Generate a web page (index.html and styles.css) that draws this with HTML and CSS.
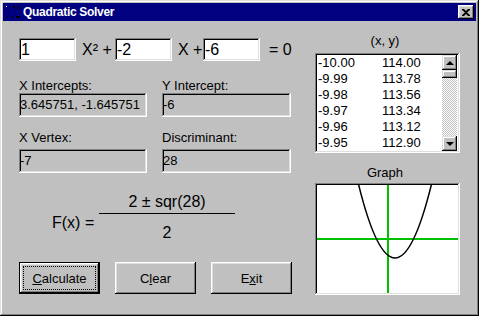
FILE: index.html
```html
<!DOCTYPE html>
<html>
<head>
<meta charset="utf-8">
<link rel="stylesheet" href="styles.css">
</head>
<body>
<div class="window">
  <div class="titlebar">
    <svg class="app-icon" width="16" height="16" viewBox="0 0 16 16">
      <rect x="2" y="3" width="1" height="1" fill="#000"/>
      <rect x="1" y="2" width="1" height="1" fill="#fff"/>
      <rect x="8" y="2" width="2" height="2" fill="#000"/>
      <rect x="12" y="2" width="1" height="1" fill="#000"/>
      <rect x="14" y="2" width="1" height="1" fill="#000"/>
      <rect x="13" y="3" width="1" height="1" fill="#000"/>
      <rect x="12" y="4" width="1" height="1" fill="#000"/>
      <rect x="14" y="4" width="1" height="1" fill="#000"/>
      <rect x="3" y="9" width="1" height="1" fill="#000"/>
      <rect x="2" y="12" width="1" height="2" fill="#000"/>
      <rect x="7" y="12" width="2" height="1" fill="#000"/>
      <rect x="11" y="12" width="4" height="2" fill="#000"/>
    </svg>
    <span class="title">Quadratic Solver</span>
    <div class="close">
      <svg width="8" height="7" viewBox="0 0 8 7">
        <path d="M0 0h2l2 2 2-2h2v1L5 3.5 8 6v1H6L4 5 2 7H0V6l3-2.5L0 1z" fill="#000"/>
      </svg>
    </div>
  </div>
  <div class="client">
    <div class="left">
      <div class="equation">
        <div class="field white eq-box">1</div>
        <span class="term term-a">X² +</span>
        <div class="field white eq-box">-2</div>
        <span class="term term-b">X +</span>
        <div class="field white eq-box">-6</div>
        <span class="term term-c">= 0</span>
      </div>
      <div class="results">
        <div class="group">
          <div class="label">X Intercepts:</div>
          <div class="field ro">3.645751, -1.645751</div>
        </div>
        <div class="group">
          <div class="label">Y Intercept:</div>
          <div class="field ro">-6</div>
        </div>
        <div class="group second">
          <div class="label">X Vertex:</div>
          <div class="field ro">-7</div>
        </div>
        <div class="group second">
          <div class="label">Discriminant:</div>
          <div class="field ro">28</div>
        </div>
      </div>
      <div class="formula">
        <div class="fx">F(x) =</div>
        <div class="fraction">
          <div class="num">2 ± sqr(28)</div>
          <div class="den">2</div>
        </div>
      </div>
      <div class="buttons">
        <div class="btn default"><span class="focus"><u>C</u>alculate</span></div>
        <div class="btn">C<u>l</u>ear</div>
        <div class="btn">E<u>x</u>it</div>
      </div>
    </div>
    <div class="right">
      <div class="caption">(x, y)</div>
      <div class="listbox">
        <div class="rows">
          <div class="row"><span class="cx">-10.00</span><span>114.00</span></div>
          <div class="row"><span class="cx">-9.99</span><span>113.78</span></div>
          <div class="row"><span class="cx">-9.98</span><span>113.56</span></div>
          <div class="row"><span class="cx">-9.97</span><span>113.34</span></div>
          <div class="row"><span class="cx">-9.96</span><span>113.12</span></div>
          <div class="row"><span class="cx">-9.95</span><span>112.90</span></div>
        </div>
        <div class="scrollbar">
          <div class="sb-btn"><span class="arrow up"></span></div>
          <div class="sb-thumb"></div>
          <div class="sb-track"></div>
          <div class="sb-btn"><span class="arrow down"></span></div>
        </div>
      </div>
      <div class="caption graph-caption">Graph</div>
      <div class="graph">
        <svg width="141" height="108" viewBox="0 0 141 108">
          <rect x="70" y="0" width="2" height="108" fill="#00c000"/>
          <rect x="0" y="53" width="141" height="2" fill="#00c000"/>
          <path d="M39.5 -9.1 Q78 155.1 116.5 -9.1" fill="none" stroke="#000" stroke-width="1.5"/>
        </svg>
      </div>
    </div>
  </div>
</div>
</body>
</html>
```
FILE: styles.css
```css
* { box-sizing: border-box; }

body {
  margin: 0;
  background: #c0c0c0;
  font-family: "Liberation Sans", Arial, sans-serif;
  font-size: 13px;
  color: #000;
}

.window {
  width: 479px;
  height: 316px;
  padding: 3px;
  background: #c0c0c0;
  box-shadow: inset -1px -1px #000, inset 1px 1px #dfdfdf,
              inset -2px -2px #808080, inset 2px 2px #fff;
  display: flex;
  flex-direction: column;
}

.titlebar {
  height: 18px;
  background: #000080;
  color: #fff;
  display: flex;
  align-items: center;
  padding: 0 2px 0 2px;
}

.app-icon { display: block; margin-right: 2px; }

.title {
  flex: 1;
  font-weight: bold;
  font-size: 12px;
  letter-spacing: -0.3px;
  line-height: 18px;
}

.close {
  width: 16px;
  height: 14px;
  background: #c0c0c0;
  box-shadow: inset -1px -1px #000, inset 1px 1px #fff,
              inset -2px -2px #808080, inset 2px 2px #dfdfdf;
  display: flex;
  align-items: center;
  justify-content: center;
  padding-right: 1px;
}
.close svg { display: block; }

.client {
  flex: 1;
  display: flex;
  padding-left: 16px;
}

.left {
  width: 273px;
  padding-top: 17px;
}

.field {
  box-shadow: inset -1px -1px #fff, inset 1px 1px #808080,
              inset -2px -2px #dfdfdf, inset 2px 2px #000;
  padding: 0 1px;
  white-space: nowrap;
  overflow: hidden;
}
.field.white { background: #fff; }
.field.ro { background: #c0c0c0; height: 24px; line-height: 24px; }

.equation {
  display: flex;
  align-items: center;
  height: 23px;
}
.eq-box {
  width: 57px;
  height: 23px;
  line-height: 23px;
  font-size: 16px;
  padding-left: 2px;
}
.term { font-size: 16px; line-height: 23px; white-space: nowrap; }
.term-a { width: 39px; padding-left: 6px; }
.term-b { width: 31px; padding-left: 6px; }
.term-c { padding-left: 9px; }

.results {
  display: grid;
  grid-template-columns: 128px 129px;
  column-gap: 15px;
  margin-top: 18px;
}
.label { height: 14px; line-height: 14px; }
.group.second { margin-top: 14px; }
.group.second .label { margin-bottom: 4px; }

.formula {
  display: flex;
  margin-top: 20px;
  font-size: 16px;
}
.fx {
  margin-left: 33px;
  width: 47px;
  padding-top: 21px;
  line-height: 18px;
}
.fraction { width: 136px; text-align: center; }
.num {
  line-height: 18px;
  padding-bottom: 2px;
  border-bottom: 1px solid #000;
}
.den { line-height: 18px; margin-top: 10px; }

.buttons {
  display: flex;
  gap: 15px;
  margin-top: 20px;
}
.btn {
  width: 81px;
  height: 32px;
  display: flex;
  align-items: center;
  justify-content: center;
  box-shadow: inset -1px -1px #000, inset 1px 1px #fff,
              inset -2px -2px #808080, inset 2px 2px #dfdfdf;
}
.btn.default { border: 1px solid #000; }
.focus {
  flex: 1;
  align-self: stretch;
  margin: 3px;
  border: 1px dotted #000;
  display: flex;
  align-items: center;
  justify-content: center;
}

.right {
  width: 145px;
  margin-left: 23px;
  padding-top: 13px;
}
.caption { text-align: center; line-height: 14px; height: 14px; padding-right: 5px; }
.graph-caption { margin-top: 13px; margin-bottom: 3px; }

.listbox {
  margin-top: 5px;
  height: 100px;
  background: #fff;
  padding: 2px;
  display: flex;
  box-shadow: inset -1px -1px #fff, inset 1px 1px #808080,
              inset -2px -2px #dfdfdf, inset 2px 2px #000;
}
.rows { flex: 1; }
.row { height: 16px; line-height: 16px; display: flex; padding-left: 1px; }
.cx { width: 64px; }

.scrollbar {
  width: 15px;
  margin-right: 1px;
  display: flex;
  flex-direction: column;
}
.sb-btn {
  height: 15px;
  background: #c0c0c0;
  box-shadow: inset -1px -1px #000, inset 1px 1px #dfdfdf,
              inset -2px -2px #808080, inset 2px 2px #fff;
  display: flex;
  align-items: center;
  justify-content: center;
}
.sb-thumb {
  height: 8px;
  background: #c0c0c0;
  box-shadow: inset -1px -1px #000, inset 1px 1px #dfdfdf,
              inset -2px -2px #808080, inset 2px 2px #fff;
}
.sb-track {
  flex: 1;
  background: repeating-conic-gradient(#fff 0 25%, #c0c0c0 0 50%) 0 0 / 2px 2px;
}
.arrow { width: 0; height: 0; border-left: 4px solid transparent; border-right: 4px solid transparent; }
.arrow.up { border-bottom: 4px solid #000; }
.arrow.down { border-top: 4px solid #000; }

.graph {
  height: 112px;
  background: #fff;
  padding: 2px;
  box-shadow: inset -1px -1px #fff, inset 1px 1px #808080,
              inset -2px -2px #dfdfdf, inset 2px 2px #000;
}
.graph svg { display: block; overflow: hidden; }
```
